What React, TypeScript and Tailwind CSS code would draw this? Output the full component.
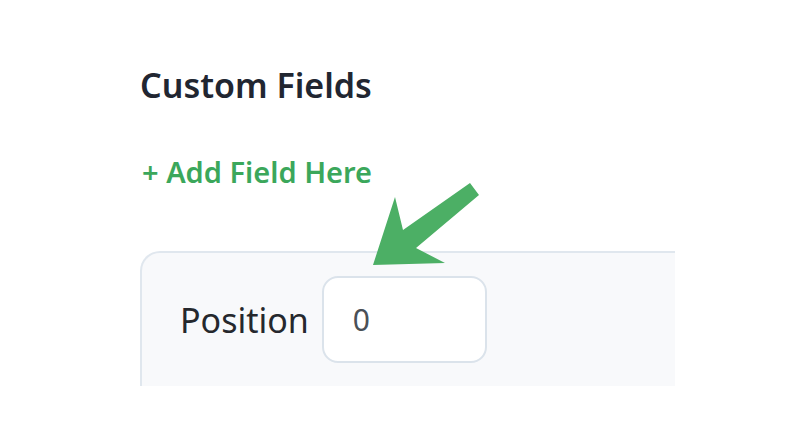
import React from 'react'

export default function App() {
  return (
    <div className="relative h-[426px] w-[800px] overflow-hidden bg-white" style={{ fontFamily: '"Noto Sans", "Open Sans", sans-serif' }}>
      <div className="pl-[140px] pt-[63px]">
        <h1 className="text-[34px] font-semibold leading-[44px] text-[#212631]">Custom Fields</h1>

        <button className="mt-[47px] block pl-[2px] text-[29px] font-semibold leading-[36px] text-[#3ba75b]">
          + Add Field Here
        </button>

        {/* fields panel, cut at the right and bottom */}
        <div className="mt-[61px] flex h-[135px] w-[535px] items-start rounded-tl-[20px] border-l-2 border-t-2 border-[#e0e7ee] bg-[#f8f9fb] pl-[38px] pt-[23px]">
          <div className="flex items-center gap-[13px]">
            <label className="text-[34px] leading-[44px] text-[#25282d]">Position</label>
            <input
              defaultValue="0"
              className="h-[87px] w-[165px] rounded-[16px] border-2 border-[#dbe3eb] bg-white px-[29px] text-[30px] text-[#4a5057] outline-none"
            />
          </div>
        </div>
      </div>

      {/* annotation arrow */}
      <svg className="absolute left-0 top-0" width="800" height="426" viewBox="0 0 800 426">
        <polygon
          points="470,183 479,195 416,248 445,263 373,265 395,197 403,230"
          fill="#4caf65"
        />
      </svg>
    </div>
  )
}
